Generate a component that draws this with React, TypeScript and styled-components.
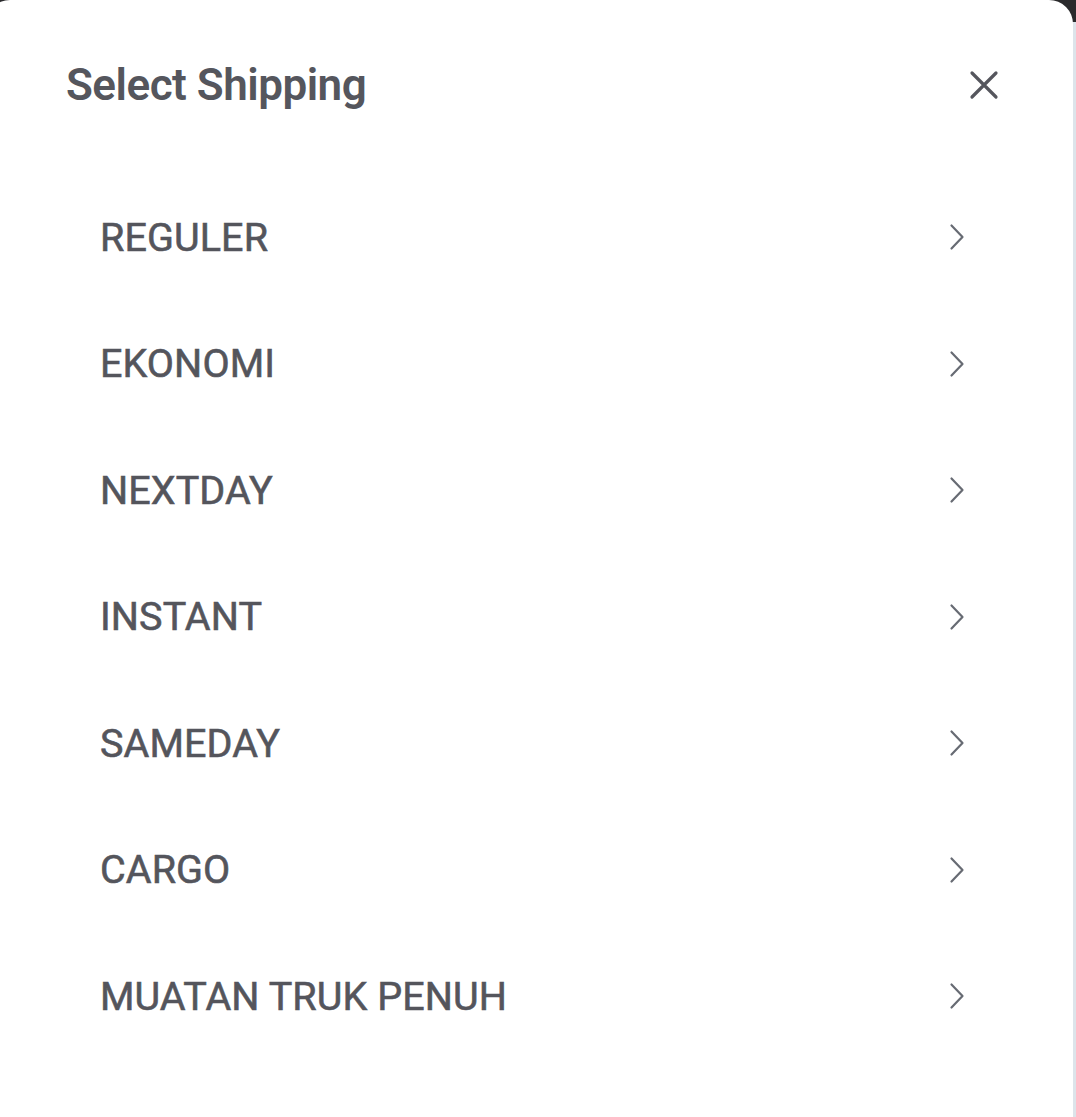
import React from "react";
import styled, { createGlobalStyle } from "styled-components";

const Global = createGlobalStyle`
  html, body { margin: 0; padding: 0; }
  body {
    background: linear-gradient(#2a2a2c 0, #2a2a2c 22px, #dde4ea 22px);
    font-family: Roboto, "Noto Sans", Arial, sans-serif;
    overflow: hidden;
  }
`;

const Page = styled.div`
  width: 1076px;
  height: 1117px;
  display: flex;
  overflow: hidden;
`;

const Sheet = styled.div`
  flex: 0 0 1087px;
  margin-left: -14px;
  height: 1117px;
  background: #ffffff;
  border-radius: 24px 24px 0 0;
  box-sizing: border-box;
  padding: 50px 75px 0 80px;
  display: flex;
  flex-direction: column;
`;

const Header = styled.div`
  display: flex;
  align-items: center;
  justify-content: space-between;
  height: 70px;
  margin-bottom: 54px;
`;

const Title = styled.h1`
  margin: 0;
  font-size: 44px;
  font-weight: 600;
  color: #55565d;
  letter-spacing: -0.5px;
`;

const CloseButton = styled.button`
  border: none;
  background: none;
  padding: 0;
  width: 30px;
  height: 30px;
  display: flex;
  align-items: center;
  justify-content: center;
  cursor: pointer;
  margin-right: -1px;
`;

const List = styled.ul`
  list-style: none;
  margin: 0;
  padding: 0 33px 0 34px;
`;

const Row = styled.li`
  height: 126.5px;
  display: flex;
  align-items: center;
  justify-content: space-between;
`;

const Label = styled.span`
  font-size: 39.5px;
  font-weight: 400;
  color: #54555c;
  letter-spacing: 0.1px;
  -webkit-text-stroke: 0.6px #54555c;
`;

const items = ["REGULER", "EKONOMI", "NEXTDAY", "INSTANT", "SAMEDAY", "CARGO", "MUATAN TRUK PENUH"];

const Chevron = () => (
  <svg width="16" height="28" viewBox="0 0 16 28" fill="none">
    <path d="M2.5 2.5 L13.5 14 L2.5 25.5" stroke="#676b73" strokeWidth="2.2" strokeLinecap="round" strokeLinejoin="round" />
  </svg>
);

const CloseIcon = () => (
  <svg width="30" height="30" viewBox="0 0 30 30" fill="none">
    <path d="M3 3 L27 27 M27 3 L3 27" stroke="#55565d" strokeWidth="3.2" strokeLinecap="round" />
  </svg>
);

export default function App() {
  return (
    <Page>
      <Global />
      <Sheet>
        <Header>
          <Title>Select Shipping</Title>
          <CloseButton aria-label="Close">
            <CloseIcon />
          </CloseButton>
        </Header>
        <List>
          {items.map((it) => (
            <Row key={it}>
              <Label>{it}</Label>
              <Chevron />
            </Row>
          ))}
        </List>
      </Sheet>
    </Page>
  );
}
